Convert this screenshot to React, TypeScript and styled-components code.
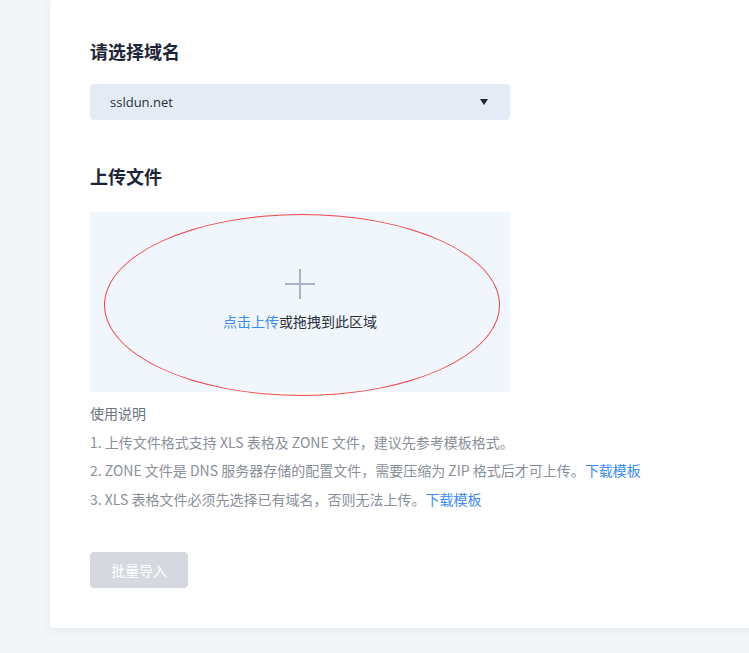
import React from 'react';
import styled, { createGlobalStyle } from 'styled-components';

const GlobalStyle = createGlobalStyle`
  html, body {
    margin: 0;
    padding: 0;
    overflow: hidden;
    background: #f3f6f9;
    font-family: "Open Sans", "Noto Sans CJK SC", sans-serif;
  }
`;

const Page = styled.div`
  padding: 0 0 25px 50px;
  width: 760px;
`;

const Card = styled.div`
  background: #fff;
  border-radius: 4px;
  box-shadow: 0 2px 8px rgba(30, 40, 60, 0.07);
  padding: 40px;
`;

const Title = styled.h3<{ $gap: number }>`
  margin: ${(p) => p.$gap}px 0 0;
  font-size: 18px;
  line-height: 24px;
  font-weight: 700;
  color: #1e2539;
`;

const Select = styled.div`
  margin-top: 20px;
  width: 420px;
  height: 36px;
  box-sizing: border-box;
  padding: 0 22px 0 20px;
  display: flex;
  align-items: center;
  justify-content: space-between;
  background: #e5ebf5;
  border-radius: 4px;
  font-size: 13px;
  color: #2b2f3a;
  cursor: pointer;
`;

const Caret = styled.span`
  width: 0;
  height: 0;
  border-left: 4px solid transparent;
  border-right: 4px solid transparent;
  border-top: 6px solid #1e2539;
`;

const Upload = styled.div`
  position: relative;
  margin-top: 23px;
  width: 420px;
  height: 180px;
  box-sizing: border-box;
  padding-bottom: 4px;
  background: #f1f5fc;
  display: flex;
  flex-direction: column;
  align-items: center;
  justify-content: center;
  gap: 13px;
  cursor: pointer;
`;

const Plus = styled.svg`
  display: block;
`;

const UploadText = styled.div`
  font-size: 14px;
  line-height: 20px;
  color: #2b2f3a;
`;

const Link = styled.a`
  color: #3b8cf0;
  text-decoration: none;
  cursor: pointer;
`;

const Mark = styled.div`
  position: absolute;
  left: 14px;
  top: 2px;
  width: 396px;
  height: 182px;
  box-sizing: border-box;
  border: 1px solid #f04848;
  border-radius: 50%;
  pointer-events: none;
`;

const Notes = styled.div`
  margin-top: 7px;
  font-family: "Noto Sans CJK SC", sans-serif;
  font-size: 14px;
  line-height: 28.5px;
  color: #8a8f99;
`;

const NotesTitle = styled.div`
  color: #6e737d;
`;

const Button = styled.button`
  margin-top: 39px;
  height: 36px;
  padding: 0 21px;
  border: none;
  border-radius: 4px;
  background: #d5d9df;
  color: #fff;
  font-family: inherit;
  font-size: 14px;
  cursor: not-allowed;
`;

const App: React.FC = () => {
  return (
    <>
      <GlobalStyle />
      <Page>
        <Card>
          <Title $gap={0}>请选择域名</Title>
          <Select>
            <span>ssldun.net</span>
            <Caret />
          </Select>

          <Title $gap={45}>上传文件</Title>
          <Upload>
            <Plus width="30" height="30" viewBox="0 0 30 30">
              <path d="M15 0v30M0 15h30" stroke="#a9b5c7" strokeWidth="2" />
            </Plus>
            <UploadText>
              <Link>点击上传</Link>或拖拽到此区域
            </UploadText>
            <Mark />
          </Upload>

          <Notes>
            <NotesTitle>使用说明</NotesTitle>
            <div>1. 上传文件格式支持 XLS 表格及 ZONE 文件，建议先参考模板格式。</div>
            <div>
              2. ZONE 文件是 DNS 服务器存储的配置文件，需要压缩为 ZIP 格式后才可上传。<Link>下载模板</Link>
            </div>
            <div>
              3. XLS 表格文件必须先选择已有域名，否则无法上传。<Link>下载模板</Link>
            </div>
          </Notes>

          <Button disabled>批量导入</Button>
        </Card>
      </Page>
    </>
  );
};

export default App;
